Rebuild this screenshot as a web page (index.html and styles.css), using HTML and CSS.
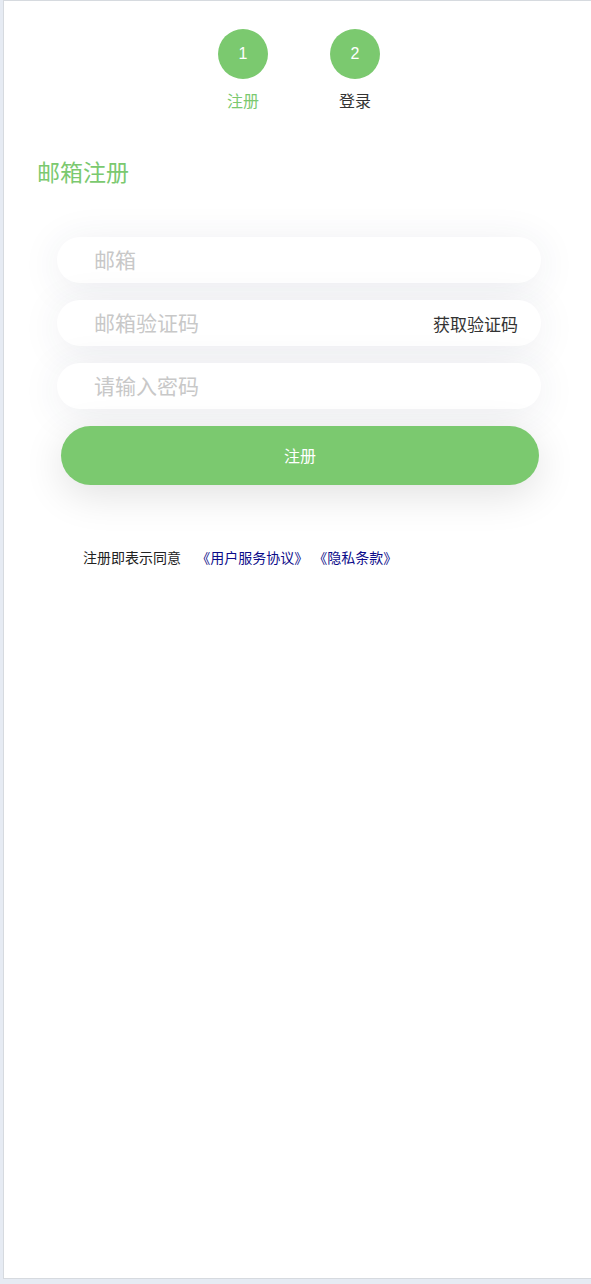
FILE: index.html
```html
<!DOCTYPE html>
<html lang="zh-CN">
<head>
    <meta charset="UTF-8">
    <meta name="viewport" content="width=device-width, initial-scale=1.0">
    <title>邮箱注册</title>
    <link rel="stylesheet" href="styles.css">
</head>
<body>
    <div class="page">
        <!-- 步骤条 -->
        <div class="steps">
            <div class="step active">
                <div class="step-num">1</div>
                <div class="step-label">注册</div>
            </div>
            <div class="step">
                <div class="step-num">2</div>
                <div class="step-label">登录</div>
            </div>
        </div>

        <h2 class="title">邮箱注册</h2>

        <form class="reg-form" onsubmit="return false">
            <div class="field">
                <input type="text" placeholder="邮箱">
            </div>
            <div class="field">
                <input type="text" placeholder="邮箱验证码">
                <span class="get-code">获取验证码</span>
            </div>
            <div class="field">
                <input type="password" placeholder="请输入密码">
            </div>
            <button class="submit">注册</button>
        </form>

        <p class="agreement">
            注册即表示同意
            <a href="#">《用户服务协议》</a><a href="#">《隐私条款》</a>
        </p>
    </div>
</body>
</html>
```

FILE: styles.css
```css
/* 注册页样式 */
body {
    margin: 0;
    padding: 0 0 5px 3px;
    background-color: #e6ebf3;
    font-family: "Microsoft YaHei", "Noto Sans CJK SC", sans-serif;
}
.page {
    box-sizing: border-box;
    height: 1279px;
    background-color: #fff;
    border: 1px solid #d6dadf;
    border-right: none;
}

/* 步骤条 */
.steps {
    display: flex;
    justify-content: center;
    gap: 62px;
    padding-top: 28px;
    padding-left: 3px;
}
.step {
    display: flex;
    flex-direction: column;
    align-items: center;
    width: 50px;
}
.step-num {
    width: 50px;
    height: 50px;
    border-radius: 50%;
    background-color: #7bc96f;
    color: #fff;
    font-family: Arial, "Liberation Sans", sans-serif;
    font-size: 16px;
    line-height: 50px;
    text-align: center;
}
.step-label {
    margin-top: 10px;
    font-size: 16px;
    line-height: 22px;
    color: #333;
    white-space: nowrap;
}
.step.active .step-label {
    color: #7bc96f;
}

.title {
    margin: 45px 0 0 33px;
    font-size: 23px;
    font-weight: normal;
    line-height: 30px;
    color: #7bc96f;
}

/* 表单 */
.reg-form {
    width: 484px;
    margin: 51px 0 0 53px;
    display: flex;
    flex-direction: column;
    gap: 17px;
}
.field {
    display: flex;
    align-items: center;
    height: 46px;
    padding: 0 23px 0 37px;
    background-color: #fff;
    border-radius: 23px;
    box-shadow: 0 5px 40px rgba(40, 60, 90, 0.09);
}
.field input {
    flex: 1;
    min-width: 0;
    height: 46px;
    padding: 0 0 3px;
    border: none;
    outline: none;
    background: transparent;
    font-family: inherit;
    font-size: 21px;
    color: #333;
}
.field input::placeholder {
    color: #c8c8c8;
}
.get-code {
    font-size: 17px;
    color: #333;
    cursor: pointer;
}
.submit {
    align-self: center;
    width: 478px;
    height: 59px;
    margin-left: 2px;
    padding-bottom: 3px;
    border: none;
    border-radius: 30px;
    background-color: #7bc96f;
    color: #fff;
    font-family: inherit;
    font-size: 16px;
    cursor: pointer;
    box-shadow: 0 10px 40px rgba(0, 0, 0, 0.12);
}

.agreement {
    margin: 63px 0 0 79px;
    font-size: 14px;
    line-height: 18px;
    color: #222;
}
.agreement a {
    color: #0c0c8a;
    text-decoration: none;
}
.agreement a:first-child {
    margin-left: 12px;
}
.agreement a + a {
    margin-left: 12px;
}
```
